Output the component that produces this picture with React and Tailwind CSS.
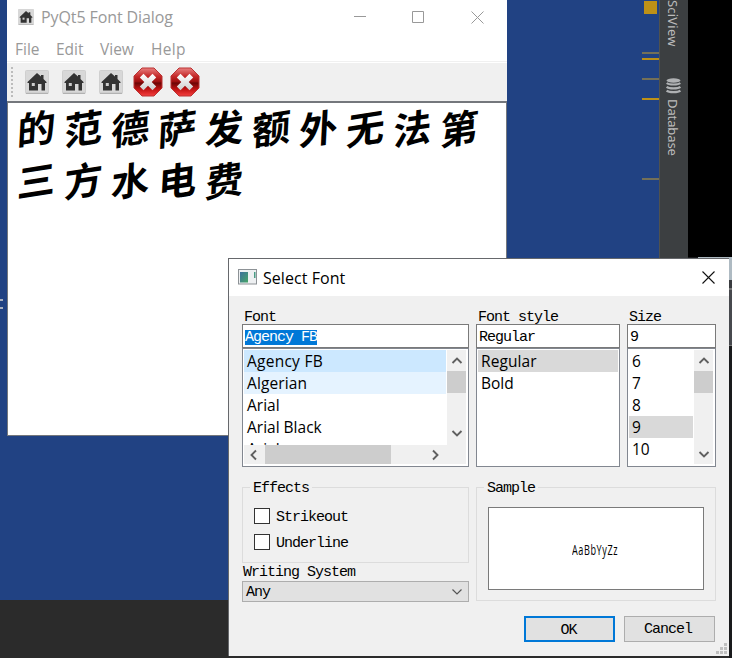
import React from 'react';

const UI = "font-['Open_Sans','Noto_Sans',sans-serif]";
const MONO = "font-['Liberation_Mono',monospace] text-[15px] tracking-[-1px]";

function HomeIcon({ className }) {
  return (
    <svg viewBox="0 0 24 24" className={className}>
      <rect x="0.5" y="0.5" width="23" height="23" rx="1" fill="#d8d8d8" stroke="#cfcfcf" />
      <path d="M1 23.3h22" stroke="#aaaaaa" />
      <path d="M12 3 16 6.5V5h2.500v4L21.500 12v1H20v7.500h-3.500V14H13v6.500H4V13H2.500v-1z" fill="#333" />
      <rect x="6.8" y="13" width="3" height="3" fill="#ccc" />
    </svg>
  );
}

function StopIcon() {
  return (
    <svg viewBox="0 0 30 30" className="h-[30px] w-[30px]">
      <defs>
        <linearGradient id="stopRed" x1="0" y1="0" x2="0" y2="1">
          <stop offset="0" stopColor="#e88080" />
          <stop offset="0.3" stopColor="#c42828" />
          <stop offset="0.48" stopColor="#a01010" />
          <stop offset="0.54" stopColor="#6c0505" />
          <stop offset="0.75" stopColor="#c01212" />
          <stop offset="1" stopColor="#f54040" />
        </linearGradient>
        <linearGradient id="stopCross" x1="0" y1="0" x2="0" y2="1">
          <stop offset="0" stopColor="#ffffff" />
          <stop offset="1" stopColor="#cfcfcf" />
        </linearGradient>
      </defs>
      <path d="M9 1h12l8 8v12l-8 8H9l-8-8V9z" fill="url(#stopRed)" stroke="#b33" strokeWidth="1" />
      <path d="M10.5 6.8 15 11.3l4.5-4.5 3.7 3.7L18.7 15l4.5 4.500-3.700 3.700-4.500-4.500-4.500 4.500-3.700-3.700 4.500-4.500-4.500-4.500z" fill="url(#stopCross)" />
    </svg>
  );
}

function Arrow({ dir = 'up', className = '' }) {
  const paths = {
    up: 'M1.5 8 6 3.5 10.5 8',
    down: 'M1.5 4 6 8.5 10.5 4',
    left: 'M8 1.5 3.5 6 8 10.5',
    right: 'M4 1.5 8.5 6 4 10.5',
  };
  return (
    <svg viewBox="0 0 12 12" className={`h-3 w-3 shrink-0 ${className}`}>
      <path d={paths[dir]} fill="none" stroke="#606060" strokeWidth="1.9" />
    </svg>
  );
}

function VScroll({ gap = 'h-6' }) {
  return (
    <div className="flex w-[19px] shrink-0 flex-col items-center bg-[#f0f0f0]">
      <div className="flex h-[21px] items-center"><Arrow dir="up" /></div>
      <div className="h-[22px] w-full bg-[#cdcdcd]" />
      <div className={`mt-auto flex items-center ${gap}`}><Arrow dir="down" /></div>
    </div>
  );
}

function Row({ children, className = 'pt-[2px]' }) {
  return (
    <div className={`flex h-[22px] shrink-0 items-center whitespace-nowrap pl-[3px] text-[15.5px] text-black ${UI} ${className}`}>
      {children}
    </div>
  );
}

function Field({ label, value, selected, className, children }) {
  return (
    <div className={`flex flex-col ${className}`}>
      <div className={`flex h-[15px] items-center pl-[2px] pt-[2px] leading-none ${MONO}`}>{label}</div>
      <div className={`flex h-6 items-center border border-[#7a7a7a] bg-white pl-[2px] pt-[2px] ${MONO}`}>
        <span className={selected ? 'bg-[#0078d7] leading-[15px] text-white' : 'leading-[15px]'}>{value}</span>
      </div>
      <div className="flex h-[119px] flex-col border border-[#828790] bg-white p-px pb-[2px] pr-[2px]">{children}</div>
    </div>
  );
}

function Group({ title, className, children }) {
  return (
    <fieldset className={`min-w-0 border border-[#dcdcdc] ${className}`}>
      <legend className={`ml-[7px] h-[17px] px-[3px] leading-[20px] ${MONO}`}>{title}</legend>
      {children}
    </fieldset>
  );
}

function Check({ children }) {
  return (
    <div className={`flex h-4 items-center gap-[6px] ${MONO}`}>
      <span className="h-4 w-4 border border-[#333] bg-white" />
      <span className="pt-[4px]">{children}</span>
    </div>
  );
}

function SelectFont() {
  return (
    <section className="absolute left-[228px] top-[258px] flex h-[398px] w-[501px] flex-col border-l border-t border-[#66686c] bg-[#f0f0f0] text-black">
      <header className="flex h-[37px] shrink-0 items-center bg-white pl-[9px] pr-[14px]">
        <svg viewBox="0 0 19 16" className="-mt-px h-4 w-[19px]">
          <defs>
            <linearGradient id="appPane" x1="0" y1="0" x2="1" y2="1">
              <stop offset="0" stopColor="#3c6f9d" />
              <stop offset="1" stopColor="#46a566" />
            </linearGradient>
          </defs>
          <rect x="0.5" y="0.5" width="18" height="14.5" fill="#eef0f2" stroke="#8d9296" />
          <rect x="2" y="3" width="8" height="10.5" fill="url(#appPane)" />
          <rect x="16" y="3" width="1.5" height="6" fill="#4b9c85" />
        </svg>
        <h2 className={`ml-[6px] text-[16px] tracking-[0.05px] ${UI}`}>Select Font</h2>
        <svg viewBox="0 0 13 13" className="-mt-px ml-auto h-[13px] w-[13px]">
          <path d="M.5.5l12 12M12.5.5l-12 12" stroke="#111" strokeWidth="1.1" />
        </svg>
      </header>
      <div className="flex h-[171px] shrink-0 gap-[7px] pl-[13px] pt-[13px]">
        <Field label="Font" value="Agency FB" selected className="w-[227px]">
          <div className="flex h-[95px]">
            <div className="mr-px flex min-w-0 flex-1 flex-col overflow-hidden">
              <Row className="bg-[#cce8ff] pt-[2px] tracking-[0.25px]">Agency FB</Row>
              <Row className="bg-[#e5f3ff] pt-[2px] tracking-[0.1px]">Algerian</Row>
              <Row>Arial</Row>
              <Row>Arial Black</Row>
              <Row className="pt-[2px]">Arial</Row>
            </div>
            <VScroll />
          </div>
          <div className="flex h-[19px] items-center bg-[#f0f0f0]">
            <Arrow dir="left" className="ml-1" />
            <div className="ml-[5px] h-full w-[126px] bg-[#cdcdcd]" />
            <Arrow dir="right" className="ml-auto mr-[25px]" />
          </div>
        </Field>
        <Field label="Font style" value="Regular" className="w-[144px]">
          <Row className="-mr-px bg-[#d9d9d9] pt-[2px] tracking-[0.1px]">Regular</Row>
          <Row>Bold</Row>
        </Field>
        <Field label="Size" value="9" className="w-[89px]">
          <div className="flex h-full">
            <div className="mr-px flex flex-1 flex-col">
              <Row>6</Row>
              <Row>7</Row>
              <Row>8</Row>
              <Row className="bg-[#d9d9d9] pt-[2px]">9</Row>
              <Row>10</Row>
            </div>
            <VScroll gap="h-[20px]" />
          </div>
        </Field>
      </div>
      <div className="mt-[12px] flex shrink-0 gap-[7px] pl-[13px]">
        <div className="w-[227px]">
          <Group title="Effects" className="h-[84px]">
            <div className="flex flex-col gap-[10px] pl-[11px] pt-[12px]">
              <Check>Strikeout</Check>
              <Check>Underline</Check>
            </div>
          </Group>
          <div className={`flex h-[18px] items-center pl-[1px] pt-[2px] ${MONO}`}>Writing System</div>
          <div className={`flex h-[21px] items-center justify-between border border-[#adadad] bg-[#e1e1e1] pl-[3px] pr-[5px] ${MONO}`}>
            <span className="pt-[3px]">Any</span>
            <svg viewBox="0 0 12 12" className="h-3 w-3"><path d="M1.5 3.5 6 8l4.500-4.500" fill="none" stroke="#555" strokeWidth="1.2" /></svg>
          </div>
        </div>
        <Group title="Sample" className="h-[122px] w-[240px]">
          <div className="ml-[11px] mt-[11px] flex h-[83px] w-[216px] items-center justify-center border border-[#7a7a7a] bg-white">
            <span className={`w-[48px] whitespace-nowrap ${UI}`}>
              <span className="inline-block origin-left scale-x-[0.65] text-[14px] tracking-[0.9px]">AaBbYyZz</span>
            </span>
          </div>
        </Group>
      </div>
      <footer className="flex pl-[295px] pt-[14px]">
        <button className={`h-[26px] w-[91px] border-2 border-[#0078d7] bg-[#e1e1e1] pr-[2px] pt-[2px] ${MONO}`}>OK</button>
        <button className={`ml-[9px] h-[26px] w-[91px] border border-[#adadad] bg-[#e1e1e1] pr-[3px] pt-[2px] ${MONO}`}>Cancel</button>
        <svg viewBox="0 0 11 11" className="ml-px mt-[27px] h-[11px] w-[11px]" fill="#bfbfbf">
          <path d="M8 0h3v3H8zM4 4h3v3H4zM8 4h3v3H8zM0 8h3v3H0zM4 8h3v3H4zM8 8h3v3H8z" />
        </svg>
      </footer>
    </section>
  );
}

function Glyphs({ text }) {
  return (
    <div className="flex h-[52px] items-center">
      {[...text].map((c, i) => (
        <span key={i} className="w-[47px] -skew-x-3 -skew-y-9 text-center font-['Noto_Sans_CJK_SC',sans-serif] text-[38px] font-bold leading-[52px] text-black">
          {c}
        </span>
      ))}
    </div>
  );
}

function MainWindow() {
  return (
    <section className="absolute left-[7px] top-0 flex h-[436px] w-[500px] flex-col bg-white">
      <header className={`flex h-[35px] shrink-0 items-center pl-[11px] text-[#999] ${UI}`}>
        <HomeIcon className="-mt-px h-4 w-4" />
        <h1 className="-mt-px ml-[7px] text-[16px] tracking-[-0.1px]">PyQt5 Font Dialog</h1>
        <svg viewBox="0 0 130 13" className="-mt-px ml-auto mr-[23px] h-[13px] w-[130px]" fill="none" stroke="#999">
          <path d="M0 5.5h12" />
          <path d="M58.5.5h11v11h-11z" />
          <path d="M117.5.5l12 12M129.5.5l-12 12" />
        </svg>
      </header>
      <nav className={`flex h-[26px] shrink-0 items-center gap-[16px] pl-2 pt-[4px] text-[15.5px] text-[#999] ${UI}`}>
        <span className="w-[25px]">File</span>
        <span className="w-[28px]">Edit</span>
        <span className="w-[35px]">View</span>
        <span className="tracking-[0.3px]">Help</span>
      </nav>
      <div className="flex h-[40px] shrink-0 items-center border-t border-[#f0f0f0] bg-white pt-px">
        <div className="flex h-[38px] w-full items-center bg-[#f0f0f0]">
          <div className="ml-[4px] mr-[13px] flex flex-col gap-[2px]">
            {[0, 1, 2, 3, 4, 5, 6, 7].map((i) => <span key={i} className="h-[2px] w-[2px] bg-[#bcbcbc]" />)}
          </div>
          <HomeIcon className="-ml-px h-6 w-6" />
          <HomeIcon className="ml-[13px] h-6 w-6" />
          <HomeIcon className="ml-[13px] h-6 w-6" />
          <span className="ml-[10px]"><StopIcon /></span>
          <span className="ml-[7px]"><StopIcon /></span>
        </div>
      </div>
      <div className="flex-1 border border-t-2 border-[#74777c] pl-[5px]">
        <div className="-mt-[2px]">
          <Glyphs text="的范德萨发额外无法第" />
          <Glyphs text="三方水电费" />
        </div>
      </div>
    </section>
  );
}

const MARKS = [
  ['top-[52px]', 'bg-[#747058]'],
  ['top-[58px]', 'bg-[#be9117]'],
  ['top-[78px]', 'bg-[#747058]'],
  ['top-[98px]', 'bg-[#be9117]'],
  ['top-[178px]', 'bg-[#747058]'],
];

export default function App() {
  return (
    <main className="relative flex h-[658px] w-[732px] flex-col overflow-hidden bg-[#2b2b2b]">
      <div className="flex h-[600px]">
        <div className="flex-1 bg-[#214283]" />
        <div className="relative w-[18px] bg-[#214283]">
          <span className="absolute left-[3px] top-px h-[13px] w-[13px] bg-[#be9117]" />
          {MARKS.map(([top, color]) => (
            <span key={top} className={`absolute left-px h-[2px] w-[17px] ${top} ${color}`} />
          ))}
        </div>
        <aside className="flex w-[29px] flex-col items-center border-l border-[#50524f] bg-[#3c3f41] pr-[3px] font-['Noto_Sans',sans-serif] text-[13px] leading-[16px] text-[#bbb]">
          <span className="h-[48px] tracking-[0.2px] [writing-mode:vertical-rl]">SciView</span>
          <svg viewBox="0 0 15 16" className="ml-[2px] mt-[30px] h-4 w-[15px]">
            <ellipse cx="7.5" cy="2.5" rx="7" ry="2.2" fill="#afb1b3" />
            <path d="M.7 5c2 2 11.600 2 13.600 0M.7 8.800c2 2 11.600 2 13.600 0M.7 12.600c2 2 11.600 2 13.600 0" fill="none" stroke="#afb1b3" strokeWidth="2.200" />
          </svg>
          <span className="mt-[5px] tracking-[-0.1px] [writing-mode:vertical-rl]">Database</span>
        </aside>
        <div className="flex w-[44px] flex-col items-end bg-[#191a1c]">
          <div className="h-[257px] w-full bg-black" />
          <div className="h-[23px] w-[34px] bg-[#aebac2]" />
          <div className="h-[8px] w-[3px] bg-[#393b3f]" />
          <div className="h-[59px] w-[3px] border-y-2 border-[#777] bg-[#47494d]" />
        </div>
      </div>
      <div className="absolute left-0 top-[299px] flex w-[3px] flex-col gap-[6px]">
        <span className="h-[2px] bg-[#a9b0bf]" />
        <span className="h-[2px] bg-[#a9b0bf]" />
      </div>
      <MainWindow />
      <SelectFont />
      <div className="absolute left-[729px] top-[346px] h-[312px] w-[3px] bg-[#191a1c]" />
    </main>
  );
}
